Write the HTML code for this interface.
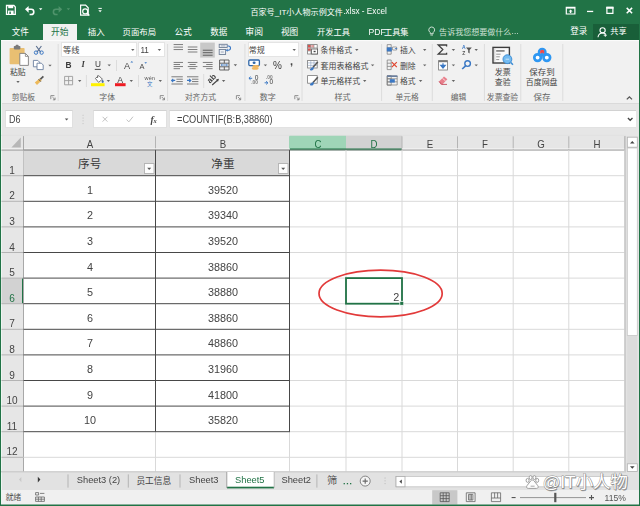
<!DOCTYPE html>
<html lang="zh"><head><meta charset="utf-8"><title>Excel</title>
<style>
html,body{margin:0;padding:0;background:#217346;}
#app{filter:blur(0.4px);position:relative;width:640px;height:506px;overflow:hidden;background:#217346;font-family:"Liberation Sans",sans-serif;}
#app .t{position:absolute;white-space:nowrap;line-height:1;}
#ov{position:absolute;left:0;top:0;}
#ov text{font-family:"Liberation Sans","Noto Sans CJK SC",sans-serif;}
#tx{position:absolute;left:0;top:0;width:640px;height:506px;will-change:transform;}
</style></head><body>
<div id="app">
<div style="position:absolute;left:1px;top:40px;width:638px;height:63.5px;background:#f1f1f1;"></div>
<div style="position:absolute;left:1px;top:103px;width:638px;height:1px;background:#dadada;"></div>
<div style="position:absolute;left:1px;top:104px;width:638px;height:32px;background:#e6e6e6;"></div>
<div style="position:absolute;left:1px;top:135px;width:638px;height:337px;background:#e6e6e6;"></div>
<div style="position:absolute;left:1px;top:471.6px;width:638px;height:18px;background:#e2e2e2;"></div>
<div style="position:absolute;left:1px;top:489.6px;width:638px;height:15px;background:#f0f0f0;"></div>
<div style="position:absolute;left:1px;top:40px;width:1px;height:464px;background:#eef6f1;"></div>
<div style="position:absolute;left:43px;top:24px;width:34.2px;height:16.5px;background:#f1f1f1;"></div>
<div style="position:absolute;left:593px;top:24px;width:46px;height:15.5px;background:#195f39;"></div>
<div style="position:absolute;left:5px;top:110.2px;width:67.5px;height:18.3px;background:#fff;box-sizing:border-box;border:1px solid #e0e0e0;border-top-color:#d2d2d2;"></div>
<div style="position:absolute;left:93px;top:110.2px;width:73.5px;height:18.3px;background:#fff;box-sizing:border-box;border:1px solid #e0e0e0;border-top-color:#d2d2d2;"></div>
<div style="position:absolute;left:169px;top:110.2px;width:467px;height:18.3px;background:#fff;box-sizing:border-box;border-top:1px solid #d2d2d2;border-left:1px solid #e2e2e2;border-bottom:1px solid #e2e2e2;"></div>
<div style="position:absolute;left:60.8px;top:42.4px;width:76.2px;height:14.8px;background:#fff;box-sizing:border-box;border:1px solid #e4e4e4;"></div>
<div style="position:absolute;left:138.2px;top:42.4px;width:26.6px;height:14.8px;background:#fff;box-sizing:border-box;border:1px solid #e4e4e4;"></div>
<div style="position:absolute;left:247.6px;top:42.4px;width:51.2px;height:14.8px;background:#fff;box-sizing:border-box;border:1px solid #e4e4e4;"></div>
<svg id="ov" width="640" height="506" viewBox="0 0 640 506">
<path d="M6.5 5.5h7.4l1.4 1.4v7.4H6.5z" fill="none" stroke="#ffffff" stroke-width="1.30" />
<rect x="8.20" y="5.20" width="5.00" height="3.00" fill="#ffffff" />
<rect x="8.00" y="10.60" width="5.60" height="4.00" fill="#ffffff" />
<rect x="9.40" y="11.60" width="1.40" height="2.40" fill="#217346" />
<path d="M26.2 9.3h5a2.6 2.6 0 0 1 0 5.2h-1.6" fill="none" stroke="#ffffff" stroke-width="1.60" />
<path d="M25 9.3l3.6-3.4v6.8z" fill="#ffffff" stroke="none" stroke-width="1.00" />
<path d="M39.00 8.25h3.40l-1.70 1.90z" fill="#ffffff" stroke="none" stroke-width="1.00" />
<path d="M61 9.3h-5a2.6 2.6 0 0 0 0 5.2h1.6" fill="none" stroke="#4f936b" stroke-width="1.60" />
<path d="M62.2 9.3l-3.6-3.4v6.8z" fill="#4f936b" stroke="none" stroke-width="1.00" />
<path d="M66.70 8.25h3.40l-1.70 1.90z" fill="#4f936b" stroke="none" stroke-width="1.00" />
<path d="M80.6 5.2h5l2.6 2.6v7.4h-7.6z" fill="none" stroke="#ffffff" stroke-width="1.20" />
<circle cx="85.2" cy="11.4" r="2.5" fill="#217346" stroke="#fff" stroke-width="1.2"/>
<line x1="87.00" y1="13.20" x2="89.40" y2="15.60" stroke="#ffffff" stroke-width="1.40" />
<line x1="98.40" y1="8.40" x2="101.80" y2="8.40" stroke="#ffffff" stroke-width="1.00" />
<path d="M98.40 10.25h3.40l-1.70 1.90z" fill="#ffffff" stroke="none" stroke-width="1.00" />
<text x="250.48" y="15.06" font-size="8.09" fill="#ffffff">百家号_IT小人物示例文件</text>
<path d="M566.3 7.4h8.6v6.6h-8.6z" fill="none" stroke="#ffffff" stroke-width="1.20" />
<rect x="566.30" y="7.00" width="8.60" height="1.60" fill="#ffffff" />
<path d="M568.6 11.6l2-2 2 2z" fill="#ffffff" stroke="none" stroke-width="1.00" />
<rect x="569.90" y="11.00" width="1.40" height="2.00" fill="#ffffff" />
<rect x="587.00" y="10.80" width="6.20" height="1.30" fill="#ffffff" />
<path d="M606.9 7.4h6v6h-6z" fill="none" stroke="#ffffff" stroke-width="1.20" />
<rect x="606.30" y="6.80" width="7.20" height="2.00" fill="#ffffff" />
<path d="M626.7 7.9l5.4 5.4M632.1 7.9l-5.4 5.4" fill="none" stroke="#ffffff" stroke-width="1.50" />
<text x="11.73" y="35.09" font-size="8.56" fill="#ffffff">文件</text>
<text x="51.07" y="35.12" font-size="8.77" fill="#217346">开始</text>
<text x="87.74" y="35.03" font-size="8.51" fill="#ffffff">插入</text>
<text x="122.61" y="34.99" font-size="8.39" fill="#ffffff">页面布局</text>
<text x="174.61" y="35.04" font-size="8.57" fill="#ffffff">公式</text>
<text x="210.23" y="35.04" font-size="8.56" fill="#ffffff">数据</text>
<text x="245.31" y="35.21" font-size="8.86" fill="#ffffff">审阅</text>
<text x="280.90" y="35.09" font-size="8.69" fill="#ffffff">视图</text>
<text x="317.10" y="34.94" font-size="8.24" fill="#ffffff">开发工具</text>
<text x="384.00" y="34.92" font-size="8.18" fill="#ffffff">工具集</text>
<path d="M431.7 27a2.9 2.9 0 0 1 1.5 5.4v1.3h-3v-1.3a2.9 2.9 0 0 1 1.5-5.4z" fill="none" stroke="#dbe9e0" stroke-width="0.9"/>
<line x1="430.40" y1="35.00" x2="433.00" y2="35.00" stroke="#dbe9e0" stroke-width="0.90" />
<text x="439.11" y="34.83" font-size="8.04" fill="#cfe2d6">告诉我您想要做什么</text>
<text x="570.28" y="34.44" font-size="8.56" fill="#ffffff">登录</text>
<circle cx="602.6" cy="30.3" r="2.6" fill="none" stroke="#fff" stroke-width="1.1"/>
<path d="M598 37.2c0.4-3 2.4-4.2 4.6-4.2c1.3 0 2.2 0.4 2.9 1" fill="none" stroke="#ffffff" stroke-width="1.10" />
<path d="M605.3 33.6v3.2M603.7 35.2h3.2" fill="none" stroke="#ffffff" stroke-width="0.90" />
<text x="610.21" y="34.34" font-size="8.21" fill="#ffffff">共享</text>
<path d="M64.80 118.40h3.60l-1.80 2.00z" fill="#555" stroke="none" stroke-width="1.00" />
<rect x="82.60" y="114.80" width="0.90" height="0.90" fill="#b8b8b8" />
<rect x="82.60" y="117.60" width="0.90" height="0.90" fill="#b8b8b8" />
<rect x="82.60" y="120.40" width="0.90" height="0.90" fill="#b8b8b8" />
<rect x="82.60" y="123.20" width="0.90" height="0.90" fill="#b8b8b8" />
<path d="M102.6 116.8l4.8 4.8M107.4 116.8l-4.8 4.8" fill="none" stroke="#c2c2c2" stroke-width="1.00" />
<path d="M126.6 119.6l2.2 2.3l4.2-5.2" fill="none" stroke="#c2c2c2" stroke-width="1.00" />
<path d="M627.9 118l2.3 2.3l2.3-2.3" fill="none" stroke="#444" stroke-width="1.30" />
<rect x="1.00" y="40.00" width="638.00" height="1.20" fill="#fbfbfb" />
<line x1="58.20" y1="44.00" x2="58.20" y2="101.00" stroke="#dcdcdc" stroke-width="1.00" />
<line x1="167.60" y1="44.00" x2="167.60" y2="101.00" stroke="#dcdcdc" stroke-width="1.00" />
<line x1="244.90" y1="44.00" x2="244.90" y2="101.00" stroke="#dcdcdc" stroke-width="1.00" />
<line x1="302.00" y1="44.00" x2="302.00" y2="101.00" stroke="#dcdcdc" stroke-width="1.00" />
<line x1="381.60" y1="44.00" x2="381.60" y2="101.00" stroke="#dcdcdc" stroke-width="1.00" />
<line x1="432.30" y1="44.00" x2="432.30" y2="101.00" stroke="#dcdcdc" stroke-width="1.00" />
<line x1="484.40" y1="44.00" x2="484.40" y2="101.00" stroke="#dcdcdc" stroke-width="1.00" />
<line x1="520.80" y1="44.00" x2="520.80" y2="101.00" stroke="#dcdcdc" stroke-width="1.00" />
<line x1="562.80" y1="44.00" x2="562.80" y2="101.00" stroke="#dcdcdc" stroke-width="1.00" />
<rect x="9.60" y="48.00" width="15.00" height="16.20" fill="#e9bf72" rx="0.8"/>
<rect x="13.80" y="46.00" width="6.60" height="3.40" fill="#7a7a7a" rx="0.8"/>
<rect x="15.60" y="44.80" width="3.00" height="2.00" fill="#7a7a7a" rx="0.8"/>
<path d="M19.8 53.4h5.6l3 3v9h-8.6z" fill="#fff" stroke="#7f7f7f" stroke-width="0.90" />
<path d="M25.4 53.4v3h3" fill="none" stroke="#7f7f7f" stroke-width="0.80" />
<text x="10.01" y="75.27" font-size="7.83" fill="#444444">粘贴</text>
<path d="M16.30 81.05h3.40l-1.70 1.90z" fill="#666666" stroke="none" stroke-width="1.00" />
<path d="M36.2 46l4.6 6.4M41.4 46l-4.6 6.4" fill="none" stroke="#5c6f8f" stroke-width="1.10" />
<circle cx="36" cy="52.6" r="1.7" fill="none" stroke="#3b78c4" stroke-width="1"/>
<circle cx="41.6" cy="52.6" r="1.7" fill="none" stroke="#3b78c4" stroke-width="1"/>
<path d="M33.4 60.4h4.4l1.8 1.8v4.6h-6.2z" fill="#fff" stroke="#6a7f9f" stroke-width="0.90" />
<path d="M37 63.2h4.4l1.8 1.8v4.6h-6.2z" fill="#fff" stroke="#6a7f9f" stroke-width="0.90" />
<path d="M48.30 64.65h3.40l-1.70 1.90z" fill="#666666" stroke="none" stroke-width="1.00" />
<path d="M43.4 76.4l-3.4 3.2" fill="none" stroke="#555" stroke-width="1.80" />
<path d="M39.6 78.4l2 2.2l-4.6 4.4l-2.2-2.4z" fill="#edb95a" stroke="none" stroke-width="1.00" />
<path d="M38.6 79.2l2.2 2.4" fill="none" stroke="#555" stroke-width="1.00" />
<text x="11.63" y="99.57" font-size="7.79" fill="#666666">剪贴板</text>
<path d="M50.80 99.20v-3.6h3.6" fill="none" stroke="#777" stroke-width="0.80" />
<path d="M52.40 97.00l2.6 2.6M55.10 99.80v-2.2M55.10 99.80h-2.2" fill="none" stroke="#777" stroke-width="0.80" />
<text x="62.99" y="53.46" font-size="8.24" fill="#444444">等线</text>
<path d="M131.10 49.05h3.40l-1.70 1.90z" fill="#666666" stroke="none" stroke-width="1.00" />
<path d="M157.70 49.05h3.40l-1.70 1.90z" fill="#666666" stroke="none" stroke-width="1.00" />
<line x1="94.80" y1="69.40" x2="100.80" y2="69.40" stroke="#3a3a3a" stroke-width="0.90" />
<path d="M107.50 64.45h3.40l-1.70 1.90z" fill="#666666" stroke="none" stroke-width="1.00" />
<line x1="116.50" y1="60.00" x2="116.50" y2="71.00" stroke="#dcdcdc" stroke-width="1.00" />
<path d="M130.4 62.6l1.4-1.6l1.4 1.6z" fill="#3b78c4" stroke="none" stroke-width="1.00" />
<path d="M144.4 62.2l1.3 1.5l1.3-1.5z" fill="#3b78c4" stroke="none" stroke-width="1.00" />
<path d="M64.6 76.4h8v8.4h-8zM68.6 76.4v8.4M64.6 80.6h8" fill="none" stroke="#9c9c9c" stroke-width="0.90" />
<path d="M78.00 80.05h3.40l-1.70 1.90z" fill="#666666" stroke="none" stroke-width="1.00" />
<line x1="86.40" y1="75.00" x2="86.40" y2="87.00" stroke="#dcdcdc" stroke-width="1.00" />
<path d="M95.4 78.4l3.4-2.8l3.6 3.6l-3.8 3.2z" fill="#fff" stroke="#666" stroke-width="0.90" />
<path d="M97.6 75.4v2.6" fill="none" stroke="#666" stroke-width="0.90" />
<path d="M102.6 79.4c0.9 1.2 1.2 1.9 1.2 2.4a1.1 1.1 0 0 1-2.2 0c0-0.5 0.3-1.2 1-2.4z" fill="#4a6fa8" stroke="none" stroke-width="1.00" />
<rect x="91.00" y="83.20" width="13.60" height="3.00" fill="#fff200" />
<path d="M106.70 80.05h3.40l-1.70 1.90z" fill="#666666" stroke="none" stroke-width="1.00" />
<rect x="115.00" y="83.20" width="10.60" height="3.00" fill="#ee1c24" />
<path d="M129.60 80.05h3.40l-1.70 1.90z" fill="#666666" stroke="none" stroke-width="1.00" />
<line x1="138.50" y1="75.00" x2="138.50" y2="87.00" stroke="#dcdcdc" stroke-width="1.00" />
<text x="147.03" y="85.88" font-size="5.4" fill="#3b78c4">文</text>
<path d="M158.60 80.05h3.40l-1.70 1.90z" fill="#666666" stroke="none" stroke-width="1.00" />
<text x="99.28" y="99.63" font-size="7.89" fill="#666666">字体</text>
<path d="M160.20 99.20v-3.6h3.6" fill="none" stroke="#777" stroke-width="0.80" />
<path d="M161.80 97.00l2.6 2.6M164.50 99.80v-2.2M164.50 99.80h-2.2" fill="none" stroke="#777" stroke-width="0.80" />
<rect x="173.60" y="44.15" width="9.40" height="0.90" fill="#727272" />
<rect x="173.60" y="46.65" width="9.40" height="0.90" fill="#727272" />
<rect x="173.60" y="49.15" width="9.40" height="0.90" fill="#727272" />
<rect x="187.80" y="46.55" width="9.60" height="0.90" fill="#727272" />
<rect x="187.80" y="49.05" width="9.60" height="0.90" fill="#727272" />
<rect x="187.80" y="51.55" width="9.60" height="0.90" fill="#727272" />
<rect x="200.20" y="42.60" width="14.60" height="15.00" fill="#c8c8c8" />
<rect x="202.80" y="49.75" width="9.80" height="0.90" fill="#555" />
<rect x="202.80" y="52.25" width="9.80" height="0.90" fill="#555" />
<rect x="202.80" y="54.75" width="9.80" height="0.90" fill="#555" />
<rect x="173.60" y="61.95" width="9.40" height="0.90" fill="#727272" />
<rect x="173.60" y="64.05" width="6.40" height="0.90" fill="#727272" />
<rect x="173.60" y="66.15" width="9.40" height="0.90" fill="#727272" />
<rect x="173.60" y="68.25" width="6.40" height="0.90" fill="#727272" />
<rect x="187.80" y="61.95" width="9.60" height="0.90" fill="#727272" />
<rect x="189.50" y="64.05" width="6.20" height="0.90" fill="#727272" />
<rect x="187.80" y="66.15" width="9.60" height="0.90" fill="#727272" />
<rect x="189.50" y="68.25" width="6.20" height="0.90" fill="#727272" />
<rect x="202.80" y="61.95" width="9.80" height="0.90" fill="#727272" />
<rect x="206.20" y="64.05" width="6.40" height="0.90" fill="#727272" />
<rect x="202.80" y="66.15" width="9.80" height="0.90" fill="#727272" />
<rect x="206.20" y="68.25" width="6.40" height="0.90" fill="#727272" />
<rect x="219.20" y="44.30" width="8.00" height="3.20" fill="#eef1f5" stroke="#6f7f96" stroke-width="0.9"/>
<rect x="219.20" y="49.50" width="6.40" height="5.00" fill="#eef1f5" stroke="#6f7f96" stroke-width="0.9"/>
<path d="M220.8 45.9h4.6M220.8 52h3" fill="none" stroke="#8b98ab" stroke-width="0.80" />
<path d="M227.4 46h1a1.9 1.9 0 0 1 0 4.2h-1.4" fill="none" stroke="#3b78c4" stroke-width="1.10" />
<path d="M227.6 48.6l-1.9 1.6l1.9 1.6z" fill="#3b78c4" stroke="none" stroke-width="1.00" />
<path d="M219.6 60h9.4v10h-9.4zM219.6 63.2h9.4M219.6 66.8h9.4M224.3 60v3.2M224.3 66.8v3.2" fill="none" stroke="#555" stroke-width="0.90" />
<path d="M221.2 65h6.2M222.4 63.9l-1.2 1.1l1.2 1.1M226.2 63.9l1.2 1.1l-1.2 1.1" fill="none" stroke="#3b78c4" stroke-width="0.80" />
<path d="M233.70 64.25h3.40l-1.70 1.90z" fill="#666666" stroke="none" stroke-width="1.00" />
<rect x="171.40" y="76.35" width="11.40" height="0.90" fill="#727272" />
<rect x="176.40" y="78.75" width="6.40" height="0.90" fill="#727272" />
<rect x="176.40" y="81.15" width="6.40" height="0.90" fill="#727272" />
<rect x="171.40" y="83.55" width="11.40" height="0.90" fill="#727272" />
<path d="M175.20 80.40h-3.4M173.20 78.80l-1.6 1.6l1.6 1.6" fill="none" stroke="#3b78c4" stroke-width="1.10" />
<rect x="187.00" y="76.35" width="11.40" height="0.90" fill="#727272" />
<rect x="192.00" y="78.75" width="6.40" height="0.90" fill="#727272" />
<rect x="192.00" y="81.15" width="6.40" height="0.90" fill="#727272" />
<rect x="187.00" y="83.55" width="11.40" height="0.90" fill="#727272" />
<path d="M187.00 80.40h3.4M189.20 78.80l1.6 1.6l-1.6 1.6" fill="none" stroke="#3b78c4" stroke-width="1.10" />
<line x1="203.70" y1="74.00" x2="203.70" y2="88.00" stroke="#dcdcdc" stroke-width="1.00" />
<path d="M212.2 85l5.6-5" fill="none" stroke="#444" stroke-width="1.10" />
<path d="M219 78.8l-3 0.8l2 2.2z" fill="#444" stroke="none" stroke-width="1.00" />
<path d="M221.90 80.05h3.40l-1.70 1.90z" fill="#666666" stroke="none" stroke-width="1.00" />
<text x="184.69" y="99.62" font-size="7.88" fill="#666666">对齐方式</text>
<path d="M236.40 99.20v-3.6h3.6" fill="none" stroke="#777" stroke-width="0.80" />
<path d="M238.00 97.00l2.6 2.6M240.70 99.80v-2.2M240.70 99.80h-2.2" fill="none" stroke="#777" stroke-width="0.80" />
<text x="248.87" y="53.35" font-size="8.01" fill="#444444">常规</text>
<path d="M292.50 49.05h3.40l-1.70 1.90z" fill="#666666" stroke="none" stroke-width="1.00" />
<rect x="248.80" y="60.00" width="10.60" height="5.60" fill="#ffffff" rx="1" stroke="#2f66a8" stroke-width="1.3"/>
<ellipse cx="254.1" cy="62.8" rx="1.5" ry="1.3" fill="#2f66a8"/>
<ellipse cx="255.8" cy="66.2" rx="3.4" ry="1.3" fill="#f2b860"/>
<ellipse cx="255.2" cy="68.4" rx="3.4" ry="1.3" fill="#f2b860"/>
<path d="M263.70 64.45h3.40l-1.70 1.90z" fill="#666666" stroke="none" stroke-width="1.00" />
<path d="M252.2 78.3h-3.2M250.6 76.7l-1.7 1.6l1.7 1.6" fill="none" stroke="#3b78c4" stroke-width="1.00" />
<path d="M264.6 82.8h3.2M266.2 81.2l1.7 1.6l-1.7 1.6" fill="none" stroke="#3b78c4" stroke-width="1.00" />
<text x="259.74" y="99.65" font-size="8" fill="#666666">数字</text>
<path d="M294.80 99.20v-3.6h3.6" fill="none" stroke="#777" stroke-width="0.80" />
<path d="M296.40 97.00l2.6 2.6M299.10 99.80v-2.2M299.10 99.80h-2.2" fill="none" stroke="#777" stroke-width="0.80" />
<rect x="307.60" y="44.60" width="9.60" height="9.40" fill="#fff" stroke="#7a7a7a" stroke-width="0.8"/>
<rect x="308.00" y="45.00" width="2.80" height="2.60" fill="#d9534f" />
<rect x="308.00" y="48.40" width="2.80" height="2.40" fill="#d9534f" />
<rect x="311.40" y="45.00" width="2.60" height="2.60" fill="#e8a0a0" />
<path d="M310.8 44.6v9.4M314 44.6v4M307.6 47.8h9.6M307.6 51h3.2" fill="none" stroke="#8a8a8a" stroke-width="0.60" />
<rect x="311.60" y="49.00" width="6.00" height="5.00" fill="#fff" stroke="#555" stroke-width="0.8"/>
<rect x="313.60" y="50.80" width="2.00" height="1.40" fill="#444" />
<text x="320.55" y="52.79" font-size="7.87" fill="#444444">条件格式</text>
<path d="M355.10 49.05h3.40l-1.70 1.90z" fill="#666666" stroke="none" stroke-width="1.00" />
<rect x="307.60" y="60.40" width="9.60" height="7.60" fill="#fff" stroke="#7a7a7a" stroke-width="0.8"/>
<path d="M307.6 62.90h9.6M307.6 65.40h9.6M310.8 60.40v7.6M314 60.40v7.6" fill="none" stroke="#8aa0c0" stroke-width="0.60" />
<path d="M317.80 62.00l-5 5.6" fill="none" stroke="#555" stroke-width="1.50" />
<path d="M311.80 67.40l2.2 -0.4l-0.6 2.6c-1.6 1.4-3.4 0.8-3.6-0.2z" fill="#3b78c4" stroke="none" stroke-width="1.00" />
<text x="320.55" y="68.61" font-size="7.98" fill="#444444">套用表格格式</text>
<path d="M370.90 64.45h3.40l-1.70 1.90z" fill="#666666" stroke="none" stroke-width="1.00" />
<rect x="307.60" y="75.60" width="9.60" height="7.60" fill="#fff" stroke="#7a7a7a" stroke-width="0.8"/>
<path d="M317.80 77.20l-5 5.6" fill="none" stroke="#555" stroke-width="1.50" />
<path d="M311.80 82.60l2.2 -0.4l-0.6 2.6c-1.6 1.4-3.4 0.8-3.6-0.2z" fill="#3b78c4" stroke="none" stroke-width="1.00" />
<text x="320.39" y="83.84" font-size="7.97" fill="#444444">单元格样式</text>
<path d="M363.00 80.05h3.40l-1.70 1.90z" fill="#666666" stroke="none" stroke-width="1.00" />
<text x="334.38" y="99.70" font-size="8.12" fill="#666666">样式</text>
<path d="M387.20 44.60h4v9.6h-4zM387.20 47.80h4M387.20 51.00h4" fill="none" stroke="#777" stroke-width="0.70" />
<rect x="386.80" y="47.40" width="5.00" height="4.00" fill="#3b78c4" />
<path d="M392.60 47.00h4v3h-4z" fill="#fff" stroke="#777" stroke-width="0.70" />
<path d="M397.20 48.60h-2.4" fill="none" stroke="#3b78c4" stroke-width="0.90" />
<text x="399.96" y="52.77" font-size="7.84" fill="#444444">插入</text>
<path d="M423.00 49.05h3.40l-1.70 1.90z" fill="#666666" stroke="none" stroke-width="1.00" />
<path d="M387.20 60.00h4v9.6h-4zM387.20 63.20h4M387.20 66.40h4" fill="none" stroke="#777" stroke-width="0.70" />
<path d="M391.80 62.20l5 5M396.80 62.20l-5 5" fill="none" stroke="#e0442e" stroke-width="1.20" />
<text x="399.92" y="68.59" font-size="7.82" fill="#444444">删除</text>
<path d="M423.00 64.45h3.40l-1.70 1.90z" fill="#666666" stroke="none" stroke-width="1.00" />
<path d="M387.20 75.60h4v9.6h-4zM387.20 78.80h4M387.20 82.00h4" fill="none" stroke="#777" stroke-width="0.70" />
<path d="M387.20 76.00h10v9h-10zM387.20 78.80h10M387.20 81.80h10" fill="none" stroke="#777" stroke-width="0.70" />
<rect x="389.80" y="79.20" width="5.00" height="3.40" fill="#3b78c4" />
<rect x="387.00" y="75.40" width="10.40" height="1.60" fill="#6a7f9f" />
<text x="400.00" y="83.77" font-size="7.81" fill="#444444">格式</text>
<path d="M418.90 80.05h3.40l-1.70 1.90z" fill="#666666" stroke="none" stroke-width="1.00" />
<text x="395.60" y="99.55" font-size="7.75" fill="#666666">单元格</text>
<path d="M446.6 46.4v-1.4h-8.4l4.6 4.6l-4.6 4.6h8.4v-1.4" fill="none" stroke="#3f3f3f" stroke-width="1.30" />
<path d="M451.70 49.05h3.40l-1.70 1.90z" fill="#666666" stroke="none" stroke-width="1.00" />
<path d="M466 47.4h5.8l-2.2 2.6v3.4l-1.4-1v-2.4z" fill="#555" stroke="none" stroke-width="1.00" />
<path d="M474.50 49.05h3.40l-1.70 1.90z" fill="#666666" stroke="none" stroke-width="1.00" />
<rect x="438.60" y="60.60" width="8.80" height="9.40" fill="#fff" stroke="#777" stroke-width="0.8"/>
<rect x="438.60" y="60.40" width="8.80" height="1.80" fill="#777" />
<path d="M443 63.2v3M440.8 65.4l2.2 2.6l2.2-2.6z" fill="#3b78c4" stroke="#3b78c4" stroke-width="1.20" />
<path d="M451.70 64.45h3.40l-1.70 1.90z" fill="#666666" stroke="none" stroke-width="1.00" />
<circle cx="467.6" cy="63.6" r="2.8" fill="none" stroke="#3b78c4" stroke-width="1.4"/>
<path d="M465.6 65.8l-3.4 3.2" fill="none" stroke="#3b78c4" stroke-width="1.60" />
<path d="M474.50 64.45h3.40l-1.70 1.90z" fill="#666666" stroke="none" stroke-width="1.00" />
<path d="M439 81.4l5-4.8l3.4 2.6l-5 5.2h-1.6z" fill="#e8808c" stroke="none" stroke-width="1.00" />
<path d="M439 81.4l2.6 3h5.4" fill="none" stroke="#c24a5a" stroke-width="0.90" />
<path d="M442.4 78.2l3.2 2.8" fill="none" stroke="#fff" stroke-width="0.70" />
<path d="M451.70 80.05h3.40l-1.70 1.90z" fill="#666666" stroke="none" stroke-width="1.00" />
<text x="450.76" y="99.58" font-size="7.77" fill="#666666">编辑</text>
<rect x="493.00" y="47.40" width="16.40" height="15.60" fill="#fafafa" stroke="#3c3c3c" stroke-width="1.4"/>
<rect x="496.20" y="50.00" width="8.40" height="1.80" fill="#8a8a8a" />
<path d="M496.2 54.2h4.4M496.2 56.8h3.6M496.2 59.6h3" fill="none" stroke="#8a8a8a" stroke-width="0.90" />
<path d="M494.8 48.4v13.4" fill="none" stroke="#aaa" stroke-width="0.60" />
<circle cx="507.4" cy="59.2" r="4.4" fill="#74bbf0" stroke="#3f8fd6" stroke-width="1"/>
<path d="M505.6 59.2h3.6" fill="none" stroke="#d6ebfa" stroke-width="0.90" />
<path d="M510.6 62.4l2.4 2.4" fill="none" stroke="#3f8fd6" stroke-width="1.50" />
<text x="494.80" y="75.05" font-size="8" fill="#444444">发票</text>
<text x="494.75" y="85.48" font-size="7.91" fill="#444444">查验</text>
<text x="486.80" y="99.61" font-size="7.84" fill="#666666">发票查验</text>
<circle cx="537.6" cy="57.6" r="3.3" fill="#fff" stroke="#2e97f2" stroke-width="2.7"/>
<circle cx="546.8" cy="57.6" r="3.3" fill="#fff" stroke="#2e97f2" stroke-width="2.7"/>
<circle cx="542.2" cy="52.2" r="3.2" fill="#fff" stroke="#2e97f2" stroke-width="2.6"/>
<circle cx="542.2" cy="52.0" r="2.2" fill="#f24a4a"/>
<path d="M539.6 56.2l2.6-2.2l2.6 2.2" fill="none" stroke="#2e97f2" stroke-width="2.20" />
<text x="529.32" y="75.22" font-size="8.45" fill="#444444">保存到</text>
<text x="525.81" y="85.45" font-size="7.93" fill="#444444">百度网盘</text>
<text x="533.62" y="99.84" font-size="8.51" fill="#666666">保存</text>
<path d="M626.8 99.4l2.6-2.6l2.6 2.6" fill="none" stroke="#555" stroke-width="1.30" />
<rect x="23.50" y="150.10" width="601.00" height="321.50" fill="#ffffff" />
<path d="M20.8 137.6v10h-9.4z" fill="#b7b7b7" stroke="none" stroke-width="1.00" />
<rect x="289.50" y="135.30" width="56.50" height="14.80" fill="#9fd5b7" />
<rect x="346.00" y="135.30" width="56.00" height="14.80" fill="#d2d2d2" />
<rect x="289.50" y="148.50" width="112.50" height="1.80" fill="#217346" />
<line x1="23.50" y1="136.30" x2="23.50" y2="150.10" stroke="#b4b4b4" stroke-width="1.00" />
<line x1="155.50" y1="136.30" x2="155.50" y2="150.10" stroke="#b4b4b4" stroke-width="1.00" />
<line x1="289.50" y1="136.30" x2="289.50" y2="150.10" stroke="#9fd5b7" stroke-width="1.00" />
<line x1="402.00" y1="136.30" x2="402.00" y2="150.10" stroke="#b4b4b4" stroke-width="1.00" />
<line x1="457.50" y1="136.30" x2="457.50" y2="150.10" stroke="#b4b4b4" stroke-width="1.00" />
<line x1="513.20" y1="136.30" x2="513.20" y2="150.10" stroke="#b4b4b4" stroke-width="1.00" />
<line x1="568.80" y1="136.30" x2="568.80" y2="150.10" stroke="#b4b4b4" stroke-width="1.00" />
<line x1="624.50" y1="136.30" x2="624.50" y2="150.10" stroke="#b4b4b4" stroke-width="1.00" />
<line x1="1.00" y1="135.30" x2="626.00" y2="135.30" stroke="#e0e0e0" stroke-width="0.80" />
<line x1="1.50" y1="148.80" x2="289.50" y2="148.80" stroke="#f2f2f2" stroke-width="1.00" />
<line x1="402.00" y1="148.80" x2="624.50" y2="148.80" stroke="#f2f2f2" stroke-width="1.00" />
<rect x="1.50" y="278.10" width="22.00" height="25.60" fill="#d2d2d2" />
<rect x="22.00" y="278.10" width="1.80" height="25.60" fill="#217346" />
<line x1="1.50" y1="175.70" x2="23.50" y2="175.70" stroke="#b4b4b4" stroke-width="1.00" />
<line x1="1.50" y1="201.30" x2="23.50" y2="201.30" stroke="#b4b4b4" stroke-width="1.00" />
<line x1="1.50" y1="226.90" x2="23.50" y2="226.90" stroke="#b4b4b4" stroke-width="1.00" />
<line x1="1.50" y1="252.50" x2="23.50" y2="252.50" stroke="#b4b4b4" stroke-width="1.00" />
<line x1="1.50" y1="278.10" x2="23.50" y2="278.10" stroke="#b4b4b4" stroke-width="1.00" />
<line x1="1.50" y1="303.70" x2="23.50" y2="303.70" stroke="#b4b4b4" stroke-width="1.00" />
<line x1="1.50" y1="329.30" x2="23.50" y2="329.30" stroke="#b4b4b4" stroke-width="1.00" />
<line x1="1.50" y1="354.90" x2="23.50" y2="354.90" stroke="#b4b4b4" stroke-width="1.00" />
<line x1="1.50" y1="380.50" x2="23.50" y2="380.50" stroke="#b4b4b4" stroke-width="1.00" />
<line x1="1.50" y1="406.10" x2="23.50" y2="406.10" stroke="#b4b4b4" stroke-width="1.00" />
<line x1="1.50" y1="431.70" x2="23.50" y2="431.70" stroke="#b4b4b4" stroke-width="1.00" />
<line x1="1.50" y1="457.30" x2="23.50" y2="457.30" stroke="#b4b4b4" stroke-width="1.00" />
<line x1="23.50" y1="136.30" x2="23.50" y2="471.60" stroke="#a8a8a8" stroke-width="1.00" />
<line x1="1.50" y1="150.10" x2="624.50" y2="150.10" stroke="#9e9e9e" stroke-width="1.00" />
<line x1="346.00" y1="150.10" x2="346.00" y2="471.60" stroke="#d9d9d9" stroke-width="1.00" />
<line x1="402.00" y1="150.10" x2="402.00" y2="471.60" stroke="#d9d9d9" stroke-width="1.00" />
<line x1="457.50" y1="150.10" x2="457.50" y2="471.60" stroke="#d9d9d9" stroke-width="1.00" />
<line x1="513.20" y1="150.10" x2="513.20" y2="471.60" stroke="#d9d9d9" stroke-width="1.00" />
<line x1="568.80" y1="150.10" x2="568.80" y2="471.60" stroke="#d9d9d9" stroke-width="1.00" />
<line x1="289.50" y1="431.70" x2="289.50" y2="471.60" stroke="#d9d9d9" stroke-width="1.00" />
<line x1="155.50" y1="431.70" x2="155.50" y2="471.60" stroke="#d9d9d9" stroke-width="1.00" />
<line x1="289.50" y1="175.70" x2="624.50" y2="175.70" stroke="#d9d9d9" stroke-width="1.00" />
<line x1="289.50" y1="201.30" x2="624.50" y2="201.30" stroke="#d9d9d9" stroke-width="1.00" />
<line x1="289.50" y1="226.90" x2="624.50" y2="226.90" stroke="#d9d9d9" stroke-width="1.00" />
<line x1="289.50" y1="252.50" x2="624.50" y2="252.50" stroke="#d9d9d9" stroke-width="1.00" />
<line x1="289.50" y1="278.10" x2="624.50" y2="278.10" stroke="#d9d9d9" stroke-width="1.00" />
<line x1="289.50" y1="303.70" x2="624.50" y2="303.70" stroke="#d9d9d9" stroke-width="1.00" />
<line x1="289.50" y1="329.30" x2="624.50" y2="329.30" stroke="#d9d9d9" stroke-width="1.00" />
<line x1="289.50" y1="354.90" x2="624.50" y2="354.90" stroke="#d9d9d9" stroke-width="1.00" />
<line x1="289.50" y1="380.50" x2="624.50" y2="380.50" stroke="#d9d9d9" stroke-width="1.00" />
<line x1="289.50" y1="406.10" x2="624.50" y2="406.10" stroke="#d9d9d9" stroke-width="1.00" />
<line x1="289.50" y1="431.70" x2="624.50" y2="431.70" stroke="#d9d9d9" stroke-width="1.00" />
<line x1="23.50" y1="457.30" x2="624.50" y2="457.30" stroke="#d9d9d9" stroke-width="1.00" />
<rect x="23.50" y="150.10" width="266.00" height="25.60" fill="#d9d9d9" />
<line x1="23.50" y1="150.10" x2="290.00" y2="150.10" stroke="#8a8a8a" stroke-width="1.00" />
<line x1="23.50" y1="175.70" x2="290.00" y2="175.70" stroke="#484848" stroke-width="1.00" />
<line x1="23.50" y1="201.30" x2="290.00" y2="201.30" stroke="#484848" stroke-width="1.00" />
<line x1="23.50" y1="226.90" x2="290.00" y2="226.90" stroke="#484848" stroke-width="1.00" />
<line x1="23.50" y1="252.50" x2="290.00" y2="252.50" stroke="#484848" stroke-width="1.00" />
<line x1="23.50" y1="278.10" x2="290.00" y2="278.10" stroke="#484848" stroke-width="1.00" />
<line x1="23.50" y1="303.70" x2="290.00" y2="303.70" stroke="#484848" stroke-width="1.00" />
<line x1="23.50" y1="329.30" x2="290.00" y2="329.30" stroke="#484848" stroke-width="1.00" />
<line x1="23.50" y1="354.90" x2="290.00" y2="354.90" stroke="#484848" stroke-width="1.00" />
<line x1="23.50" y1="380.50" x2="290.00" y2="380.50" stroke="#484848" stroke-width="1.00" />
<line x1="23.50" y1="406.10" x2="290.00" y2="406.10" stroke="#484848" stroke-width="1.00" />
<line x1="23.50" y1="431.70" x2="290.00" y2="431.70" stroke="#484848" stroke-width="1.00" />
<line x1="155.50" y1="150.10" x2="155.50" y2="431.70" stroke="#484848" stroke-width="1.00" />
<line x1="289.50" y1="150.10" x2="289.50" y2="431.70" stroke="#484848" stroke-width="1.00" />
<text x="78.10" y="167.93" font-size="11.62" fill="#3a3a3a">序号</text>
<text x="211.31" y="167.94" font-size="11.62" fill="#3a3a3a">净重</text>
<rect x="144.40" y="163.60" width="9.60" height="9.80" fill="#fdfdfd" stroke="#a9a9a9" stroke-width="0.8"/>
<path d="M147.20 167.70h4.00l-2.00 2.20z" fill="#555" stroke="none" stroke-width="1.00" />
<rect x="278.40" y="163.60" width="9.60" height="9.80" fill="#fdfdfd" stroke="#a9a9a9" stroke-width="0.8"/>
<path d="M281.20 167.70h4.00l-2.00 2.20z" fill="#555" stroke="none" stroke-width="1.00" />
<rect x="346.00" y="278.10" width="56.00" height="25.60" fill="none" stroke="#217346" stroke-width="1.8"/>
<rect x="399.80" y="301.30" width="4.00" height="4.00" fill="#217346" stroke="#fff" stroke-width="0.8"/>
<ellipse cx="380.6" cy="293.5" rx="61.6" ry="23.3" fill="none" stroke="#e23a3a" stroke-width="1.7"/>
<rect x="625.00" y="136.00" width="13.50" height="335.60" fill="#e2e2e2" />
<line x1="625.00" y1="136.00" x2="625.00" y2="471.00" stroke="#c2c2c2" stroke-width="1.40" />
<rect x="627.30" y="147.50" width="10.00" height="316.00" fill="#dcdcdc" />
<rect x="627.30" y="148.00" width="10.00" height="187.50" fill="#ffffff" stroke="#c6c6c6" stroke-width="0.8"/>
<rect x="627.30" y="137.20" width="10.00" height="10.00" fill="#ffffff" stroke="#b0b0b0" stroke-width="0.8"/>
<path d="M630 143.6l2.3-2.6l2.3 2.6z" fill="#444" stroke="none" stroke-width="1.00" />
<rect x="627.30" y="463.80" width="10.00" height="7.60" fill="#ffffff" stroke="#b0b0b0" stroke-width="0.8"/>
<path d="M630 466.2l2.3 2.6l2.3-2.6z" fill="#444" stroke="none" stroke-width="1.00" />
<line x1="1.00" y1="471.80" x2="626.00" y2="471.80" stroke="#c4c4c4" stroke-width="1.00" />
<path d="M19 479.6l2.4-2.6v5.2z" fill="#c9c9c9" stroke="none" stroke-width="1.00" />
<path d="M40.4 479.6l-2.6-2.8v5.6z" fill="#3a3a3a" stroke="none" stroke-width="1.00" />
<line x1="68.00" y1="474.40" x2="68.00" y2="487.60" stroke="#b4b4b4" stroke-width="1.00" />
<line x1="128.30" y1="474.40" x2="128.30" y2="487.60" stroke="#b4b4b4" stroke-width="1.00" />
<line x1="180.00" y1="474.40" x2="180.00" y2="487.60" stroke="#b4b4b4" stroke-width="1.00" />
<line x1="316.90" y1="474.40" x2="316.90" y2="487.60" stroke="#b4b4b4" stroke-width="1.00" />
<text x="136.42" y="483.54" font-size="8.71" fill="#444">员工信息</text>
<rect x="227.00" y="472.00" width="47.00" height="15.40" fill="#ffffff" />
<rect x="227.00" y="486.70" width="47.00" height="1.70" fill="#217346" />
<line x1="226.80" y1="472.00" x2="226.80" y2="488.00" stroke="#9a9a9a" stroke-width="0.90" />
<line x1="274.20" y1="472.00" x2="274.20" y2="488.00" stroke="#b8b8b8" stroke-width="0.90" />
<text x="326.94" y="484.31" font-size="10.23" fill="#555">筛</text>
<rect x="343.60" y="483.00" width="1.30" height="1.30" fill="#217346" />
<rect x="346.80" y="483.00" width="1.30" height="1.30" fill="#217346" />
<rect x="350.00" y="483.00" width="1.30" height="1.30" fill="#217346" />
<circle cx="365.2" cy="481.1" r="5" fill="#f4f4f4" stroke="#858585" stroke-width="1"/>
<path d="M362.6 481.1h5.2M365.2 478.5v5.2" fill="none" stroke="#666" stroke-width="1.10" />
<rect x="384.60" y="477.60" width="0.90" height="0.90" fill="#b0b0b0" />
<rect x="384.60" y="480.40" width="0.90" height="0.90" fill="#b0b0b0" />
<rect x="384.60" y="483.20" width="0.90" height="0.90" fill="#b0b0b0" />
<rect x="396.00" y="476.40" width="228.00" height="10.40" fill="#ffffff" stroke="#c4c4c4" stroke-width="0.8"/>
<rect x="396.00" y="476.40" width="9.00" height="10.40" fill="#ffffff" stroke="#ababab" stroke-width="0.8"/>
<path d="M401.8 479.4l-2.4 2.2l2.4 2.2z" fill="#444" stroke="none" stroke-width="1.00" />
<text x="5.40" y="500.03" font-size="7.96" fill="#555">就绪</text>
<path d="M35.6 492.6h3v2.4h-3zM40 493.4h4.4M35.6 497h8.8v4.4h-8.8zM38.4 497v4.4M41.2 497v4.4M35.6 499.2h8.8" fill="none" stroke="#666" stroke-width="0.80" />
<rect x="432.20" y="490.20" width="25.20" height="14.30" fill="#c8c8c8" />
<path d="M440.2 492.8h9v8.8h-9zM443.2 492.8v8.8M446.2 492.8v8.8M440.2 495.7h9M440.2 498.6h9" fill="none" stroke="#555" stroke-width="0.80" />
<path d="M466.3 492.8h8.8v8.8h-8.8zM468.5 494.4h4.4v5.6h-4.4zM470 494.4v5.6M471.4 494.4v5.6" fill="none" stroke="#666" stroke-width="0.80" />
<path d="M491.4 492.8h9.2v8.8h-9.2zM494.6 492.8v5.2M497.6 492.8v5.2M491.4 498h9.2" fill="none" stroke="#666" stroke-width="0.80" />
<rect x="511.60" y="497.00" width="4.00" height="1.10" fill="#555" />
<line x1="520.00" y1="497.60" x2="586.00" y2="497.60" stroke="#8a8a8a" stroke-width="0.90" />
<rect x="554.20" y="492.80" width="2.20" height="9.40" fill="#555" />
<path d="M589 497.6h5M591.5 495.1v5" fill="none" stroke="#555" stroke-width="1.10" />
<rect x="0.00" y="504.50" width="640.00" height="1.50" fill="#217346" />
<g>
<path d="M528.2 488.4c-1.6 0-2.2-1.6-1-3l3.4-4.4c1-1.3 2.6-1.3 3.6 0l3.4 4.4c1.2 1.4 0.6 3-1 3z" fill="#fdfdfd" stroke="#9d9d9d" stroke-width="1"/>
<ellipse cx="527.6" cy="480.4" rx="1.5" ry="2.0" fill="#fdfdfd" stroke="#9d9d9d" stroke-width="1"/>
<ellipse cx="537.2" cy="480.4" rx="1.5" ry="2.0" fill="#fdfdfd" stroke="#9d9d9d" stroke-width="1"/>
<ellipse cx="530.6" cy="477.6" rx="1.5" ry="2.0" fill="#fdfdfd" stroke="#9d9d9d" stroke-width="1"/>
<ellipse cx="534.4" cy="477.6" rx="1.5" ry="2.0" fill="#fdfdfd" stroke="#9d9d9d" stroke-width="1"/>
<path d="M530.6 486.2h4" fill="none" stroke="#9d9d9d" stroke-width="0.90" />
<text x="543.33" y="489.17" font-size="17.4" fill="#5a5a5a" fill-opacity="0.5" stroke="#6a6a6a" stroke-width="0.7" stroke-opacity="0.4" stroke-linejoin="round">@IT小人物</text>
<text x="542.63" y="488.47" font-size="17.4" fill="#ffffff" stroke="#7d7d7d" stroke-width="0.97" stroke-opacity="0.8" paint-order="stroke" stroke-linejoin="round">@IT小人物</text>
</g>
</svg>
<div id="tx">
<div class="t" style="top:8.26px;font-size:8.2px;color:#ffffff;left:343.20px;">.xlsx - Excel</div>
<div class="t" style="top:27.62px;font-size:8.6px;color:#ffffff;left:368.60px;">PDF</div>
<div class="t" style="top:27.49px;font-size:8.4px;color:#cfe2d6;left:511.60px;">...</div>
<div class="t" style="top:114.97px;font-size:10.2px;color:#444;left:9.30px;transform:scaleX(0.88);transform-origin:0 50%;">D6</div>
<div class="t" style="top:115.07px;font-size:9.6px;color:#444;font-style:italic;left:150.40px;font-family:'Liberation Serif',serif;font-weight:bold;">f</div>
<div class="t" style="top:118.18px;font-size:6.4px;color:#444;font-style:italic;left:153.40px;font-family:'Liberation Serif',serif;font-weight:bold;">x</div>
<div class="t" style="top:114.97px;font-size:10.2px;color:#444;left:177.00px;transform:scaleX(0.905);transform-origin:0 50%;">=COUNTIF(B:B,38860)</div>
<div class="t" style="top:47.06px;font-size:8.2px;color:#444444;left:140.40px;">11</div>
<div class="t" style="top:60.89px;font-size:8.4px;color:#3a3a3a;font-weight:bold;left:65.40px;">B</div>
<div class="t" style="top:60.89px;font-size:8.4px;color:#3a3a3a;font-weight:bold;font-style:italic;left:81.60px;font-family:'Liberation Serif',serif;">I</div>
<div class="t" style="top:61.06px;font-size:8.2px;color:#3a3a3a;left:94.90px;">U</div>
<div class="t" style="top:61.61px;font-size:9.2px;color:#4a4a4a;left:124.00px;">A</div>
<div class="t" style="top:62.74px;font-size:7.4px;color:#4a4a4a;left:139.60px;">A</div>
<div class="t" style="top:75.55px;font-size:8.8px;color:#3f3f3f;left:117.30px;">A</div>
<div class="t" style="top:75.66px;font-size:5.6px;color:#555;left:144.60px;">w&#233;n</div>
<div class="t" style="top:75.23px;font-size:8px;color:#444;font-weight:bold;left:211.80px;transform:translateX(-50%);transform:translateX(-50%) rotate(-45deg);">ab</div>
<div class="t" style="top:60.43px;font-size:10.6px;color:#3a3a3a;left:272.80px;transform:scaleX(0.94);transform-origin:0 50%;">%</div>
<div class="t" style="top:56.29px;font-size:11px;color:#444;font-weight:bold;left:290.00px;">,</div>
<div class="t" style="top:74.61px;font-size:6.6px;color:#3a3a3a;left:254.70px;">0</div>
<div class="t" style="top:80.74px;font-size:4.8px;color:#7a7a7a;font-weight:bold;left:251.20px;">.00</div>
<div class="t" style="top:75.94px;font-size:4.8px;color:#7a7a7a;font-weight:bold;left:266.00px;">.00</div>
<div class="t" style="top:79.41px;font-size:6.6px;color:#3a3a3a;left:269.60px;">0</div>
<div class="t" style="top:44.77px;font-size:5px;color:#3b78c4;font-weight:bold;left:462.00px;">A</div>
<div class="t" style="top:50.57px;font-size:5px;color:#555;font-weight:bold;left:462.20px;">Z</div>
<div class="t" style="top:138.85px;font-size:11.4px;color:#444;left:89.50px;transform:translateX(-50%);transform:translateX(-50%) scaleX(0.85);">A</div>
<div class="t" style="top:138.85px;font-size:11.4px;color:#444;left:222.50px;transform:translateX(-50%);transform:translateX(-50%) scaleX(0.85);">B</div>
<div class="t" style="top:138.85px;font-size:11.4px;color:#217346;left:317.75px;transform:translateX(-50%);transform:translateX(-50%) scaleX(0.85);">C</div>
<div class="t" style="top:138.85px;font-size:11.4px;color:#217346;left:374.00px;transform:translateX(-50%);transform:translateX(-50%) scaleX(0.85);">D</div>
<div class="t" style="top:138.85px;font-size:11.4px;color:#444;left:429.75px;transform:translateX(-50%);transform:translateX(-50%) scaleX(0.85);">E</div>
<div class="t" style="top:138.85px;font-size:11.4px;color:#444;left:485.35px;transform:translateX(-50%);transform:translateX(-50%) scaleX(0.85);">F</div>
<div class="t" style="top:138.85px;font-size:11.4px;color:#444;left:541.00px;transform:translateX(-50%);transform:translateX(-50%) scaleX(0.85);">G</div>
<div class="t" style="top:138.85px;font-size:11.4px;color:#444;left:596.65px;transform:translateX(-50%);transform:translateX(-50%) scaleX(0.85);">H</div>
<div class="t" style="top:164.82px;font-size:11.2px;color:#444;left:11.60px;transform:translateX(-50%);transform:translateX(-50%) scaleX(0.9);">1</div>
<div class="t" style="top:190.42px;font-size:11.2px;color:#444;left:11.60px;transform:translateX(-50%);transform:translateX(-50%) scaleX(0.9);">2</div>
<div class="t" style="top:216.02px;font-size:11.2px;color:#444;left:11.60px;transform:translateX(-50%);transform:translateX(-50%) scaleX(0.9);">3</div>
<div class="t" style="top:241.62px;font-size:11.2px;color:#444;left:11.60px;transform:translateX(-50%);transform:translateX(-50%) scaleX(0.9);">4</div>
<div class="t" style="top:267.22px;font-size:11.2px;color:#444;left:11.60px;transform:translateX(-50%);transform:translateX(-50%) scaleX(0.9);">5</div>
<div class="t" style="top:292.82px;font-size:11.2px;color:#217346;left:11.60px;transform:translateX(-50%);transform:translateX(-50%) scaleX(0.9);">6</div>
<div class="t" style="top:318.42px;font-size:11.2px;color:#444;left:11.60px;transform:translateX(-50%);transform:translateX(-50%) scaleX(0.9);">7</div>
<div class="t" style="top:344.02px;font-size:11.2px;color:#444;left:11.60px;transform:translateX(-50%);transform:translateX(-50%) scaleX(0.9);">8</div>
<div class="t" style="top:369.62px;font-size:11.2px;color:#444;left:11.60px;transform:translateX(-50%);transform:translateX(-50%) scaleX(0.9);">9</div>
<div class="t" style="top:395.22px;font-size:11.2px;color:#444;left:12.20px;transform:translateX(-50%);transform:translateX(-50%) scaleX(0.9);">10</div>
<div class="t" style="top:420.82px;font-size:11.2px;color:#444;left:12.20px;transform:translateX(-50%);transform:translateX(-50%) scaleX(0.9);">11</div>
<div class="t" style="top:446.42px;font-size:11.2px;color:#444;left:12.20px;transform:translateX(-50%);transform:translateX(-50%) scaleX(0.9);">12</div>
<div class="t" style="top:184.75px;font-size:11.4px;color:#444;left:89.50px;transform:translateX(-50%);transform:translateX(-50%) scaleX(0.95);">1</div>
<div class="t" style="top:184.75px;font-size:11.4px;color:#444;left:223.20px;transform:translateX(-50%);transform:translateX(-50%) scaleX(0.95);">39520</div>
<div class="t" style="top:210.35px;font-size:11.4px;color:#444;left:89.50px;transform:translateX(-50%);transform:translateX(-50%) scaleX(0.95);">2</div>
<div class="t" style="top:210.35px;font-size:11.4px;color:#444;left:223.20px;transform:translateX(-50%);transform:translateX(-50%) scaleX(0.95);">39340</div>
<div class="t" style="top:235.95px;font-size:11.4px;color:#444;left:89.50px;transform:translateX(-50%);transform:translateX(-50%) scaleX(0.95);">3</div>
<div class="t" style="top:235.95px;font-size:11.4px;color:#444;left:223.20px;transform:translateX(-50%);transform:translateX(-50%) scaleX(0.95);">39520</div>
<div class="t" style="top:261.55px;font-size:11.4px;color:#444;left:89.50px;transform:translateX(-50%);transform:translateX(-50%) scaleX(0.95);">4</div>
<div class="t" style="top:261.55px;font-size:11.4px;color:#444;left:223.20px;transform:translateX(-50%);transform:translateX(-50%) scaleX(0.95);">38860</div>
<div class="t" style="top:287.15px;font-size:11.4px;color:#444;left:89.50px;transform:translateX(-50%);transform:translateX(-50%) scaleX(0.95);">5</div>
<div class="t" style="top:287.15px;font-size:11.4px;color:#444;left:223.20px;transform:translateX(-50%);transform:translateX(-50%) scaleX(0.95);">38880</div>
<div class="t" style="top:312.75px;font-size:11.4px;color:#444;left:89.50px;transform:translateX(-50%);transform:translateX(-50%) scaleX(0.95);">6</div>
<div class="t" style="top:312.75px;font-size:11.4px;color:#444;left:223.20px;transform:translateX(-50%);transform:translateX(-50%) scaleX(0.95);">38860</div>
<div class="t" style="top:338.35px;font-size:11.4px;color:#444;left:89.50px;transform:translateX(-50%);transform:translateX(-50%) scaleX(0.95);">7</div>
<div class="t" style="top:338.35px;font-size:11.4px;color:#444;left:223.20px;transform:translateX(-50%);transform:translateX(-50%) scaleX(0.95);">48860</div>
<div class="t" style="top:363.95px;font-size:11.4px;color:#444;left:89.50px;transform:translateX(-50%);transform:translateX(-50%) scaleX(0.95);">8</div>
<div class="t" style="top:363.95px;font-size:11.4px;color:#444;left:223.20px;transform:translateX(-50%);transform:translateX(-50%) scaleX(0.95);">31960</div>
<div class="t" style="top:389.55px;font-size:11.4px;color:#444;left:89.50px;transform:translateX(-50%);transform:translateX(-50%) scaleX(0.95);">9</div>
<div class="t" style="top:389.55px;font-size:11.4px;color:#444;left:223.20px;transform:translateX(-50%);transform:translateX(-50%) scaleX(0.95);">41800</div>
<div class="t" style="top:415.15px;font-size:11.4px;color:#444;left:89.50px;transform:translateX(-50%);transform:translateX(-50%) scaleX(0.95);">10</div>
<div class="t" style="top:415.15px;font-size:11.4px;color:#444;left:223.20px;transform:translateX(-50%);transform:translateX(-50%) scaleX(0.95);">35820</div>
<div class="t" style="top:291.65px;font-size:11.4px;color:#444;right:240.80px;transform:scaleX(0.95);transform-origin:100% 50%;">2</div>
<div class="t" style="top:475.73px;font-size:9.3px;color:#444;left:98.50px;transform:translateX(-50%);">Sheet3 (2)</div>
<div class="t" style="top:475.73px;font-size:9.3px;color:#444;left:203.80px;transform:translateX(-50%);">Sheet3</div>
<div class="t" style="top:475.73px;font-size:9.3px;color:#217346;left:249.80px;transform:translateX(-50%);">Sheet5</div>
<div class="t" style="top:475.73px;font-size:9.3px;color:#444;left:296.20px;transform:translateX(-50%);">Sheet2</div>
<div class="t" style="top:493.72px;font-size:8.6px;color:#555;left:604.60px;">115%</div>
</div>
</div>
</body></html>
